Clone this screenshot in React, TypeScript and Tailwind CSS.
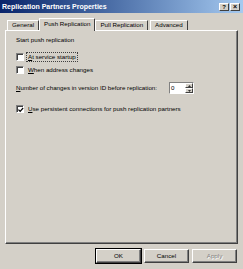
const face = "font-['Liberation_Sans',Arial,sans-serif]";

function Check({ checked }: { checked?: boolean }) {
  return (
    <span className="relative inline-block w-[8px] h-[8px] bg-white border-t border-l border-t-[#808080] border-l-[#808080] border-b border-r border-b-white border-r-white shadow-[inset_1px_1px_0_#404040] shrink-0">
      {checked && (
        <svg viewBox="0 0 7 7" className="absolute left-[1px] top-[1px] w-[6px] h-[6px]">
          <path d="M0.5 3 L2.5 5 L6 1.2" stroke="#000" strokeWidth="1.4" fill="none" />
        </svg>
      )}
    </span>
  );
}

function Tab({ label, active }: { label: string; active?: boolean }) {
  if (active) {
    return (
      <div className="relative z-10 -mb-[1px] -mx-[2px] h-[13px] px-[4px] pt-[2px] bg-[#d4d0c8] border-t border-l border-white border-r border-r-[#404040] rounded-t-[1px] flex items-start">
        {label}
      </div>
    );
  }
  return (
    <div className="h-[10px] px-[4px] bg-[#d4d0c8] border-t border-l border-white border-r border-r-[#404040] flex items-center">
      {label}
    </div>
  );
}

function Button({ label, disabled, def }: { label: string; disabled?: boolean; def?: boolean }) {
  return (
    <div
      className={
        "w-[45px] h-[14px] flex items-center justify-center border border-t-white border-l-white border-r-[#404040] border-b-[#404040] shadow-[inset_-1px_-1px_0_#808080] " +
        (def ? "outline outline-1 outline-black " : "") +
        (disabled ? "text-[#808080] [text-shadow:1px_1px_0_#fff]" : "text-black")
      }
    >
      {label}
    </div>
  );
}

export default function App() {
  return (
    <div className={"w-[243px] h-[269px] bg-[#d4d0c8] flex flex-col overflow-hidden text-[6.2px] leading-none text-black " + face}>
      <div className="h-[13px] shrink-0 bg-gradient-to-r from-[#0a246a] to-[#a6caf0] flex items-center pl-[2px] pr-[3px]">
        <span className="text-white font-bold text-[7px]">Replication Partners Properties</span>
        <div className="ml-auto flex">
          <div className="w-[10px] h-[8px] bg-[#d4d0c8] border border-t-white border-l-white border-r-[#404040] border-b-[#404040] flex items-center justify-center font-bold text-[6px]">?</div>
          <div className="ml-[1px] w-[10px] h-[8px] bg-[#d4d0c8] border border-t-white border-l-white border-r-[#404040] border-b-[#404040] flex items-center justify-center font-bold text-[7px]">×</div>
        </div>
      </div>

      <div className="mt-[7px] pl-[7px] flex items-end h-[10px] gap-[2px]">
        <Tab label="General" />
        <Tab label="Push Replication" active />
        <Tab label="Pull Replication" />
        <Tab label="Advanced" />
      </div>

      <div className="mx-[5px] h-[214px] border border-t-white border-l-white border-r-[#404040] border-b-[#404040] shadow-[inset_-1px_-1px_0_#808080] pl-[10px] pt-[6px] flex flex-col">
        <div>Start push replication</div>
        <div className="mt-[10px] flex items-center gap-[3px]">
          <Check />
          <span className="outline outline-1 outline-dotted outline-[#404040] px-[1px] py-[1px]">
            <u>A</u>t service startup
          </span>
        </div>
        <div className="mt-[5px] flex items-center gap-[4px]">
          <Check />
          <span>
            <u>W</u>hen address changes
          </span>
        </div>
        <div className="mt-[8px] flex items-center">
          <span className="w-[153px]">
            <u>N</u>umber of changes in version ID before replication:
          </span>
          <div className="w-[25px] h-[12px] bg-white border border-t-[#808080] border-l-[#808080] border-r-white border-b-white flex">
            <span className="flex-1 pl-[1px] flex items-center">0</span>
            <div className="w-[8px] flex flex-col">
              <div className="flex-1 bg-[#d4d0c8] border border-t-white border-l-white border-r-[#404040] border-b-[#404040] flex items-center justify-center">
                <svg viewBox="0 0 4 2" className="w-[3px] h-[2px]"><path d="M0 2 L2 0 L4 2 Z" fill="#000" /></svg>
              </div>
              <div className="flex-1 bg-[#d4d0c8] border border-t-white border-l-white border-r-[#404040] border-b-[#404040] flex items-center justify-center">
                <svg viewBox="0 0 4 2" className="w-[3px] h-[2px]"><path d="M0 0 L4 0 L2 2 Z" fill="#000" /></svg>
              </div>
            </div>
          </div>
        </div>
        <div className="mt-[11px] flex items-center gap-[4px]">
          <Check checked />
          <span>
            <u>U</u>se persistent connections for push replication partners
          </span>
        </div>
      </div>

      <div className="mt-[5px] pr-[6px] flex justify-end gap-[3px]">
        <Button label="OK" def />
        <Button label="Cancel" />
        <Button label="Apply" disabled />
      </div>
    </div>
  );
}
